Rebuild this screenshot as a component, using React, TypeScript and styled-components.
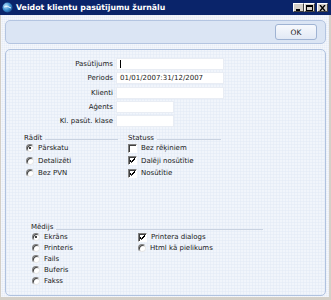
import React from "react";
import styled, { createGlobalStyle } from "styled-components";

const Global = createGlobalStyle`
  html, body { margin: 0; padding: 0; background: #d4d0c8; }
  body { font-family: "DejaVu Sans", "Liberation Sans", sans-serif; font-size: 7px; color: #1a1a1a; }
`;

const Window = styled.div`
  width: 331px;
  height: 300px;
  box-sizing: border-box;
  display: flex;
  flex-direction: column;
  background: #d4d0c8;
  padding: 0 2px 3px 1px;
`;

const TitleBar = styled.div`
  height: 15px;
  margin: 0 -2px 0 -1px;
  background: #0a246a;
  display: flex;
  align-items: center;
  padding: 0 2px;
  gap: 3px;
  flex-shrink: 0;
`;

const TitleText = styled.div`
  color: #fff;
  font-weight: bold;
  font-size: 7.8px;
  flex: 1;
  white-space: nowrap;
`;

const Controls = styled.div`
  display: flex;
  margin-right: 1px;
`;

const CtlBtn = styled.div<{ $gap?: boolean }>`
  width: 11px;
  height: 9px;
  box-sizing: border-box;
  background: #d4d0c8;
  border-top: 1px solid #fff;
  border-left: 1px solid #fff;
  border-right: 1px solid #404040;
  border-bottom: 1px solid #404040;
  margin-left: ${(p) => (p.$gap ? "2px" : "0")};
  display: flex;
  align-items: center;
  justify-content: center;
`;

const Body = styled.div`
  flex: 1;
  display: flex;
  flex-direction: column;
  gap: 5px;
  padding: 5px 3px 1px 4px;
  background-color: #e7edf7;
  background-image:
    repeating-linear-gradient(0deg, rgba(255,255,255,0.35) 0 1px, transparent 1px 2px),
    repeating-linear-gradient(90deg, rgba(255,255,255,0.35) 0 1px, transparent 1px 2px);
`;

const TopPanel = styled.div`
  height: 24px;
  box-sizing: border-box;
  border: 1px solid #b4c5e1;
  border-radius: 5px;
  background: #dbe5f4;
  display: flex;
  align-items: center;
  justify-content: flex-end;
  padding-right: 8px;
`;

const OkButton = styled.div`
  width: 42px;
  height: 16px;
  box-sizing: border-box;
  border: 1px solid #9fb3d3;
  border-radius: 3px;
  background: linear-gradient(#f7f9fd, #e2e9f5);
  display: flex;
  align-items: center;
  justify-content: center;
  font-size: 7.5px;
  color: #222;
`;

const MainPanel = styled.div`
  flex: 1;
  box-sizing: border-box;
  border: 1px solid #b0c2df;
  border-radius: 5px;
  background-color: #f1f5fb;
  background-image:
    repeating-linear-gradient(0deg, rgba(225,233,245,0.5) 0 1px, transparent 1px 3px),
    repeating-linear-gradient(90deg, rgba(225,233,245,0.5) 0 1px, transparent 1px 3px);
  display: flex;
  flex-direction: column;
  padding-top: 8px;
`;

const Fields = styled.div`
  display: grid;
  grid-template-columns: 107px 1fr;
  grid-auto-rows: 12px;
  row-gap: 2.3px;
  column-gap: 3px;
  align-items: center;
`;

const Label = styled.div`
  text-align: right;
  white-space: nowrap;
`;

const Input = styled.div<{ $w: number }>`
  width: ${(p) => p.$w}px;
  height: 12px;
  box-sizing: border-box;
  background: #fff;
  border: 1px solid #e9edf4;
  display: flex;
  align-items: center;
  padding-left: 3px;
  white-space: nowrap;
`;

const Caret = styled.span`
  display: inline-block;
  width: 1px;
  height: 8px;
  background: #000;
`;

const SectionsRow = styled.div<{ $top: number }>`
  display: flex;
  margin-top: ${(p) => p.$top}px;
`;

const Section = styled.div<{ $left: number; $width: number; $top?: number }>`
  margin-left: ${(p) => p.$left}px;
  margin-top: ${(p) => p.$top ?? 0}px;
  width: ${(p) => p.$width}px;
  display: flex;
  flex-direction: column;
`;

const SectionHead = styled.div`
  display: flex;
  align-items: center;
  gap: 3px;
  height: 9px;
`;

const HeadLine = styled.div`
  flex: 1;
  height: 1px;
  background: #c9d2e0;
  margin-top: 4px;
`;

const OptionList = styled.div<{ $pitch: number; $ml?: number }>`
  display: grid;
  grid-auto-rows: ${(p) => p.$pitch}px;
  align-items: center;
  margin-left: ${(p) => p.$ml ?? 0}px;
`;

const Option = styled.div<{ $indent: number }>`
  display: flex;
  align-items: center;
  gap: 4px;
  padding-left: ${(p) => p.$indent}px;
  white-space: nowrap;
`;

const RadioBox = styled.span`
  width: 8px;
  height: 8px;
  box-sizing: border-box;
  border-radius: 50%;
  border-top: 1px solid #808080;
  border-left: 1px solid #808080;
  border-right: 1px solid #e8e8e8;
  border-bottom: 1px solid #e8e8e8;
  background: #fff;
  display: flex;
  align-items: center;
  justify-content: center;
  box-shadow: inset 1px 1px 0 #404040;
`;

const RadioDot = styled.span`
  width: 2px;
  height: 2px;
  background: #000;
  border-radius: 50%;
`;

const CheckBox = styled.span`
  width: 9px;
  height: 9px;
  box-sizing: border-box;
  border-top: 1px solid #808080;
  border-left: 1px solid #808080;
  border-right: 1px solid #fff;
  border-bottom: 1px solid #fff;
  box-shadow: inset 1px 1px 0 #404040;
  background: #fff;
  display: flex;
  align-items: center;
  justify-content: center;
`;

const Radio = ({ on }: { on?: boolean }) => <RadioBox>{on && <RadioDot />}</RadioBox>;

const Check = ({ on }: { on?: boolean }) => (
  <CheckBox>
    {on && (
      <svg width="7" height="7" viewBox="0 0 7 7">
        <path d="M1 3 L2.5 4.5 L6 1 M1 4 L2.5 5.5 L6 2" stroke="#000" strokeWidth="1" fill="none" />
      </svg>
    )}
  </CheckBox>
);

export default function App() {
  return (
    <>
      <Global />
      <Window>
        <TitleBar>
          <svg width="11" height="11" viewBox="0 0 11 11">
            <defs>
              <radialGradient id="g" cx="0.35" cy="0.35" r="0.7">
                <stop offset="0" stopColor="#bfe6ff" />
                <stop offset="0.6" stopColor="#3a8fd0" />
                <stop offset="1" stopColor="#1a4f8f" />
              </radialGradient>
            </defs>
            <circle cx="5.5" cy="5.5" r="5" fill="url(#g)" />
            <path d="M2 5 Q5 3 9 6" stroke="#e8f6ff" strokeWidth="1" fill="none" />
          </svg>
          <TitleText>Veidot klientu pasūtījumu žurnālu</TitleText>
          <Controls>
            <CtlBtn>
              <svg width="7" height="6" viewBox="0 0 7 6"><rect x="1" y="4" width="4" height="2" fill="#000" /></svg>
            </CtlBtn>
            <CtlBtn>
              <svg width="7" height="6" viewBox="0 0 7 6"><rect x="0.5" y="0.5" width="6" height="5" fill="none" stroke="#000" /><rect x="0" y="0" width="7" height="2" fill="#000" /></svg>
            </CtlBtn>
            <CtlBtn $gap>
              <svg width="7" height="6" viewBox="0 0 7 6"><path d="M1 0 L6 6 M6 0 L1 6" stroke="#000" strokeWidth="1.4" /></svg>
            </CtlBtn>
          </Controls>
        </TitleBar>
        <Body>
          <TopPanel>
            <OkButton>OK</OkButton>
          </TopPanel>
          <MainPanel>
            <Fields>
              <Label>Pasūtījums</Label>
              <Input $w={108}><Caret /></Input>
              <Label>Periods</Label>
              <Input $w={108}>01/01/2007:31/12/2007</Input>
              <Label>Klienti</Label>
              <Input $w={108} />
              <Label>Aģents</Label>
              <Input $w={58} />
              <Label>Kl. pasūt. klase</Label>
              <Input $w={58} />
            </Fields>
            <SectionsRow $top={6}>
              <Section $left={18} $width={94}>
                <SectionHead>Rādīt<HeadLine /></SectionHead>
                <OptionList $pitch={12.5}>
                  <Option $indent={2}><Radio on />Pārskatu</Option>
                  <Option $indent={2}><Radio />Detalizēti</Option>
                  <Option $indent={2}><Radio />Bez PVN</Option>
                </OptionList>
              </Section>
              <Section $left={10} $width={93}>
                <SectionHead>Statuss<HeadLine /></SectionHead>
                <OptionList $pitch={12.5}>
                  <Option $indent={0}><Check />Bez rēķiniem</Option>
                  <Option $indent={0}><Check on />Dalēji nosūtītie</Option>
                  <Option $indent={0}><Check on />Nosūtītie</Option>
                </OptionList>
              </Section>
            </SectionsRow>
            <Section $left={25} $width={232} $top={43}>
              <SectionHead>Mēdijs<HeadLine /></SectionHead>
              <SectionsRow $top={0}>
                <OptionList $pitch={11}>
                  <Option $indent={1}><Radio on />Ekrāns</Option>
                  <Option $indent={1}><Radio />Printeris</Option>
                  <Option $indent={1}><Radio />Fails</Option>
                  <Option $indent={1}><Radio />Buferis</Option>
                  <Option $indent={1}><Radio />Fakss</Option>
                </OptionList>
                <OptionList $pitch={11} $ml={65}>
                  <Option $indent={0}><Check on />Printera dialogs</Option>
                  <Option $indent={0}><Radio />Html kā pielikums</Option>
                </OptionList>
              </SectionsRow>
            </Section>
          </MainPanel>
        </Body>
      </Window>
    </>
  );
}
